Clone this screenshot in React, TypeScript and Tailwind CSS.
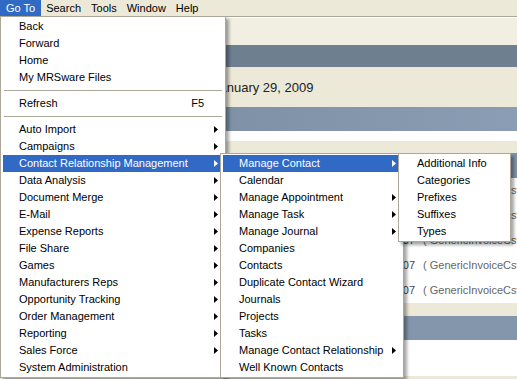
import React from "react";

type Item =
  | { sep: true }
  | { label: string; sub?: boolean; key?: string; active?: boolean; sep?: false };

const goTo: Item[] = [
  { label: "Back" },
  { label: "Forward" },
  { label: "Home" },
  { label: "My MRSware Files" },
  { sep: true },
  { label: "Refresh", key: "F5" },
  { sep: true },
  { label: "Auto Import", sub: true },
  { label: "Campaigns", sub: true },
  { label: "Contact Relationship Management", sub: true, active: true },
  { label: "Data Analysis", sub: true },
  { label: "Document Merge", sub: true },
  { label: "E-Mail", sub: true },
  { label: "Expense Reports", sub: true },
  { label: "File Share", sub: true },
  { label: "Games", sub: true },
  { label: "Manufacturers Reps", sub: true },
  { label: "Opportunity Tracking", sub: true },
  { label: "Order Management", sub: true },
  { label: "Reporting", sub: true },
  { label: "Sales Force", sub: true },
  { label: "System Administration" },
];

const crm: Item[] = [
  { label: "Manage Contact", sub: true, active: true },
  { label: "Calendar" },
  { label: "Manage Appointment", sub: true },
  { label: "Manage Task", sub: true },
  { label: "Manage Journal", sub: true },
  { label: "Companies" },
  { label: "Contacts" },
  { label: "Duplicate Contact Wizard" },
  { label: "Journals" },
  { label: "Projects" },
  { label: "Tasks" },
  { label: "Manage Contact Relationship", sub: true },
  { label: "Well Known Contacts" },
];

const contact: Item[] = [
  { label: "Additional Info" },
  { label: "Categories" },
  { label: "Prefixes" },
  { label: "Suffixes" },
  { label: "Types" },
];

function Arrow({ white }: { white?: boolean }) {
  return (
    <svg width="4" height="7" viewBox="0 0 4 7" className="shrink-0">
      <polygon points="0,0 4,3.5 0,7" fill={white ? "#ffffff" : "#000000"} />
    </svg>
  );
}

function Menu({ items, className }: { items: Item[]; className: string }) {
  return (
    <div
      className={`absolute flex flex-col border border-[#aca899] bg-white p-[1px] shadow-[3px_3px_3px_rgba(0,0,0,0.35)] ${className}`}
    >
      {items.map((item, i) =>
        item.sep ? (
          <div key={i} className="flex h-[9px] items-center px-[2px]">
            <div className="h-px w-full bg-[#aca899]" />
          </div>
        ) : (
          <div
            key={i}
            className={`mx-[1px] flex h-[17px] items-center pl-[16px] pr-[5px] ${
              item.active ? "bg-[#316ac5] text-white" : "text-black"
            }`}
          >
            <span className="flex-1 whitespace-nowrap">{item.label}</span>
            {item.key && <span className="mr-[14px]">{item.key}</span>}
            {item.sub && <Arrow white={item.active} />}
          </div>
        )
      )}
    </div>
  );
}

export default function App() {
  const rows = [0, 1, 2, 3, 4];
  return (
    <div
      className="relative h-[379px] w-[517px] overflow-hidden bg-[#ece9d8] text-[11px] leading-none"
      style={{ fontFamily: '"Liberation Sans", Arial, sans-serif' }}
    >
      {/* menu bar */}
      <div className="flex h-[16px] items-center bg-[#ece9d8] text-black">
        <div className="flex h-full items-center bg-[#316ac5] px-[6px] text-white">Go To</div>
        <div className="px-[5px]">Search</div>
        <div className="px-[5px]">Tools</div>
        <div className="px-[5px]">Window</div>
        <div className="px-[5px]">Help</div>
      </div>
      <div className="h-px bg-[#aca899]" />
      <div className="h-px bg-white" />

      {/* page behind the menus */}
      <div className="h-[27px] bg-[#f1efe2]" />
      <div className="h-[22px] bg-[#6e7f8f]" />
      <div className="flex h-[40px] items-center bg-[#ece9d8] pl-[213px] text-[13px] text-[#222]">
        January 29, 2009
      </div>
      <div className="h-[24px] bg-gradient-to-r from-[#75889b] to-[#8a9db4]" />
      <div className="h-[10px] bg-white" />
      <div className="h-[12px] bg-[#ece9d8]" />
      <div className="h-[25px] bg-[#8193a8]" />
      <div className="bg-white">
        {rows.map((r) => (
          <div key={r} className="flex h-[25px] items-center overflow-hidden whitespace-nowrap text-[#666]">
            <span className="w-[415px] shrink-0 text-right text-[#444]">1/15/2007</span>
            <span className="shrink-0 pl-[8px]">( GenericInvoiceCsv )</span>
          </div>
        ))}
      </div>
      <div className="h-[13px] bg-[#ece9d8]" />
      <div className="h-[24px] bg-[#8396ac]" />
      <div className="h-[36px] bg-white" />
      <div className="h-[10px] bg-[#ece9d8]" />

      <Menu items={goTo} className="left-0 top-[16px] w-[226px]" />
      <Menu items={crm} className="left-[220px] top-[153px] w-[184px]" />
      <Menu items={contact} className="left-[398px] top-[153px] w-[113px]" />
    </div>
  );
}
